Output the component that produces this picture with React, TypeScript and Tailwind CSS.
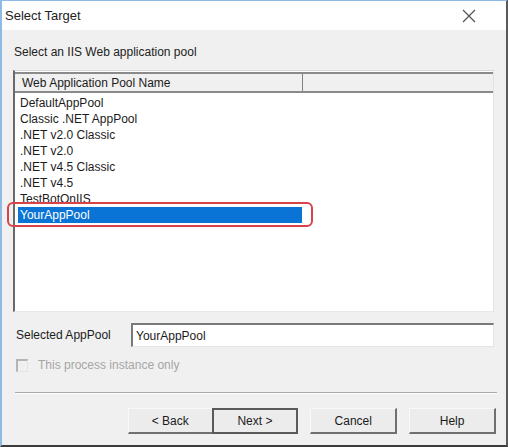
import React from "react";

const rows = [
  "DefaultAppPool",
  "Classic .NET AppPool",
  ".NET v2.0 Classic",
  ".NET v2.0",
  ".NET v4.5 Classic",
  ".NET v4.5",
  "TestBotOnIIS",
  "YourAppPool",
];

export default function App() {
  return (
    <div
      className="w-[508px] h-[447px] flex flex-col bg-[#f0f0f0] border-l-2 border-t border-l-[#8dbbe6] border-t-[#8dbbe6] border-r-2 border-r-[#5a5a5a] border-b-2 border-b-[#3c3c3c] text-[#1b1b1b] overflow-hidden"
      style={{ fontFamily: '"Liberation Sans", Arial, sans-serif' }}
    >
      {/* Title bar */}
      <div className="h-[29px] bg-white flex items-center justify-between pl-[3px] pr-[30px] shrink-0">
        <span className="text-[13px] leading-none text-[#222]">Select Target</span>
        <svg width="14" height="14" viewBox="0 0 14 14" className="mt-[1px]">
          <path d="M1 1 L13 13 M13 1 L1 13" stroke="#555" strokeWidth="1.3" />
        </svg>
      </div>

      {/* Body */}
      <div className="flex-1 flex flex-col pl-[11px] pr-[10px]">
        <div className="h-[40px] flex items-end pb-[12px] pl-[1px]">
          <span className="text-[12px] leading-none text-[#222]">Select an IIS Web application pool</span>
        </div>

        {/* List view */}
        <div className="relative h-[242px] w-[481px] bg-white border-l-2 border-l-[#6a6a6a] border-t border-t-[#d8d8d8] border-r border-r-[#e2e2e2] border-b border-b-[#e8e8e8] flex flex-col">
          <div className="h-[21px] mt-[1px] bg-[#f0f0f0] border-t-2 border-b-2 border-[#8a8a8a] flex shrink-0">
            <div className="w-[288px] border-r border-[#808080] flex items-center pl-[7px]">
              <span className="text-[12px] leading-none">Web Application Pool Name</span>
            </div>
            <div className="flex-1" />
          </div>
          <div className="flex flex-col pt-[2px] pl-[3px]">
            {rows.map((r, i) => {
              const sel = i === rows.length - 1;
              return (
                <div
                  key={r}
                  className={
                    "h-[16px] w-[284px] flex items-center pl-[2px] text-[12px] leading-none " +
                    (sel ? "bg-[#0a74d6] text-white" : "")
                  }
                >
                  {r}
                </div>
              );
            })}
          </div>
          <div className="absolute left-[-8px] top-[131px] w-[306px] h-[25px] border-2 border-[#d9424a] rounded-[6px] pointer-events-none" />
        </div>

        {/* Selected AppPool */}
        <div className="h-[24px] mt-[11px] flex items-center">
          <span className="w-[118px] pl-[3px] text-[12px] leading-none">Selected AppPool</span>
          <div className="flex-1 mr-[2px] h-[24px] bg-white border-t-2 border-l-2 border-t-[#7a7a7a] border-l-[#7a7a7a] border-r border-b border-r-[#e4e4e4] border-b-[#e4e4e4] flex items-center pl-[3px]">
            <span className="text-[12px] leading-none">YourAppPool</span>
          </div>
        </div>

        {/* checkbox */}
        <div className="h-[14px] mt-[11px] flex items-center">
          <div className="ml-[3px] w-[12px] h-[13px] border-t-2 border-l-2 border-[#b4b4b4] border-r border-b border-r-[#e4e4e4] border-b-[#e4e4e4] bg-[#f0f0f0]" />
          <span className="ml-[10px] text-[12px] leading-none text-[#a6a6a6]">This process instance only</span>
        </div>

        {/* separator */}
        <div className="mt-[20px] ml-[2px] w-[482px] h-[2px] border-t border-[#a8a8a8] border-b border-b-white" />

        {/* buttons */}
        <div className="mt-[14px] flex items-start">
          <div className="w-[115px]" />
          <button className="w-[84px] h-[26px] bg-[#ececec] border-t border-l border-[#f8f8f8] border-b-2 border-b-[#707070] flex items-center justify-center text-[12px] leading-none">
            &lt; Back
          </button>
          <button className="w-[87px] h-[26px] bg-[#ececec] border-2 border-[#5a5a5a] flex items-center justify-center text-[12px] leading-none">
            Next &gt;
          </button>
          <button className="ml-[12px] w-[87px] h-[26px] bg-[#ececec] border-t border-l border-[#f8f8f8] border-b-2 border-r-2 border-b-[#707070] border-r-[#707070] flex items-center justify-center text-[12px] leading-none">
            Cancel
          </button>
          <button className="ml-[12px] w-[87px] h-[26px] bg-[#ececec] border-t border-l border-[#f8f8f8] border-b-2 border-r-2 border-b-[#707070] border-r-[#707070] flex items-center justify-center text-[12px] leading-none">
            Help
          </button>
        </div>
      </div>
    </div>
  );
}
